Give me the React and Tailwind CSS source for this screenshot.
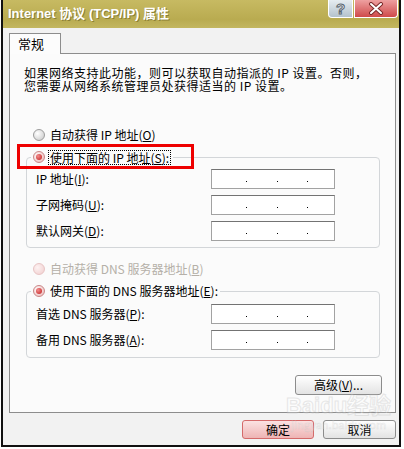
import React from 'react';

const Radio = ({ checked, disabled }) => {
    if (disabled) {
        return <span className="w-[12px] h-[12px] rounded-full border border-[#e8c4c4] bg-[radial-gradient(circle_at_35%_35%,#fdf2f2,#f0cdcd)] shrink-0" />;
    }
    return (
        <span className={`flex items-center justify-center w-[12px] h-[12px] rounded-full border shrink-0 ${checked
                ? 'border-[#c98686] bg-[radial-gradient(circle_at_35%_35%,#ffffff,#ebb2b2)]'
                : 'border-[#9c9c9c] bg-[radial-gradient(circle_at_35%_35%,#ffffff,#c6c6c6)]'
            }`}>
            {checked && <span className="w-[6px] h-[6px] rounded-full bg-[radial-gradient(circle_at_35%_35%,#f48c8c,#bf1d1d)]" />}
        </span>
    );
};

const IpBox = () => (
    <div className="w-[124px] h-[20px] bg-white border border-[#a2a2a2] border-t-[#737373] flex items-end pb-[6px]">
        <span className="ml-[34px] w-px h-px bg-black" />
        <span className="ml-[30px] w-px h-px bg-black" />
        <span className="ml-[29px] w-px h-px bg-black" />
    </div>
);

const Row = ({ label, k, rest }) => (
    <div className="flex items-center h-[20px]">
        <span className="w-[184px] pl-[9px] whitespace-nowrap">
            {label}(<u>{k}</u>){rest}
        </span>
        <IpBox />
    </div>
);

const XpButton = ({ children, primary, className = '' }) => (
    <button className={`flex items-center justify-center rounded-[3px] border text-[12px] leading-none text-black ${primary
            ? 'border-[#d46a6a] bg-[linear-gradient(#fbe2e2,#eeb4b4)]'
            : 'border-[#8c8c8c] bg-[linear-gradient(#ffffff,#e3e3e3)]'
        } ${className}`}>
        {children}
    </button>
);

export default function App() {
    return (
        <div className="w-[404px] h-[449px] bg-white font-['Noto_Sans_CJK_SC',sans-serif] text-[12px] text-black relative overflow-hidden">
            <div className="ml-px w-[400px] h-[447px] flex flex-col border-x-2 border-b-2 border-[#111]">
                {/* title bar */}
                <div className="h-[28px] flex items-start justify-between bg-[linear-gradient(#c7ba62,#b9ab50_70%,#c3b760)] shrink-0">
                    <span className="pl-[5px] pt-[6px] text-white font-bold text-[13px] leading-[16px] font-['Liberation_Sans','Noto_Sans_CJK_SC',sans-serif] [text-shadow:1px_1px_0_#8a7f35]">
                        Internet 协议 (TCP/IP) 属性
                    </span>
                    <div className="flex gap-px pr-px">
                        <div className="w-[25px] h-[18px] rounded-bl-[4px] border border-t-0 border-white bg-[linear-gradient(#e6edf1,#b4c2cc)] flex items-center justify-center">
                            <span className="text-[15px] leading-none font-bold text-[#f4f4f4] font-['Liberation_Sans',sans-serif] [-webkit-text-stroke:1px_#5a6670]">?</span>
                        </div>
                        <div className="w-[44px] h-[18px] rounded-br-[4px] border border-t-0 border-white bg-[linear-gradient(#eea0a0,#cf4a4a)] flex items-center justify-center">
                            <svg width="16" height="13" viewBox="0 0 16 13">
                                <path d="M3 2 L13 11 M13 2 L3 11" stroke="#7a2a2a" strokeWidth="4" strokeLinecap="round" />
                                <path d="M3 2 L13 11 M13 2 L3 11" stroke="#ffffff" strokeWidth="2" strokeLinecap="round" />
                            </svg>
                        </div>
                    </div>
                </div>

                {/* body */}
                <div className="flex-1 bg-[#f2f2f2] pt-[5px] flex flex-col">
                    <div className="ml-[6px] relative z-10 -mb-px w-[52px] h-[21px] border border-b-0 border-[#8d8d8d] bg-[#fcfcfc] flex items-center pl-[8px] text-[13px]">
                        常规
                    </div>
                    <div className="ml-[6px] w-[387px] h-[360px] border border-[#8d8d8d] bg-[#fbfbfb] flex flex-col">
                        <div className="pl-[14px] pt-[12px] tracking-[0.5px] whitespace-nowrap">
                            <div className="h-[13px] leading-[13px]">如果网络支持此功能，则可以获取自动指派的 IP 设置。否则，</div>
                            <div className="h-[13px] leading-[13px]">您需要从网络系统管理员处获得适当的 IP 设置。</div>
                        </div>

                        <div className="mt-[36px] pl-[23px] h-[14px] flex items-center gap-[5px]">
                            <Radio />
                            <span>自动获得 IP 地址(<u>O</u>)</span>
                        </div>

                        <div className="mt-[15px] ml-[16px] w-[354px] border border-[#d3d6d9] rounded-[4px] pb-[6px] flex flex-col">
                            <div className="-mt-[8px] ml-[4px] px-[2px] h-[14px] w-fit flex items-center gap-[3px] bg-[#fbfbfb] relative">
                                <Radio checked />
                                <span className="border border-dotted border-black px-[1px] leading-[13px]">使用下面的 IP 地址(<u>S</u>):</span>
                                <span className="absolute left-[-14px] top-[-6px] w-[177px] h-[25px] border-[3px] border-[#ee0000]" />
                            </div>
                            <div className="mt-[5px] flex flex-col gap-[6px]">
                                <Row label="IP 地址" k="I" rest=":" />
                                <Row label="子网掩码" k="U" rest=":" />
                                <Row label="默认网关" k="D" rest=":" />
                            </div>
                        </div>

                        <div className="mt-[14px] pl-[23px] h-[14px] flex items-center gap-[5px] text-[#b5b0a8]">
                            <Radio disabled />
                            <span>自动获得 DNS 服务器地址(<u>B</u>)</span>
                        </div>

                        <div className="mt-[15px] ml-[16px] w-[354px] border border-[#d3d6d9] rounded-[4px] pb-[7px] flex flex-col">
                            <div className="-mt-[8px] ml-[4px] px-[2px] h-[14px] w-fit flex items-center gap-[5px] bg-[#fbfbfb]">
                                <Radio checked />
                                <span>使用下面的 DNS 服务器地址(<u>E</u>):</span>
                            </div>
                            <div className="mt-[6px] flex flex-col gap-[6px]">
                                <Row label="首选 DNS 服务器" k="P" rest=":" />
                                <Row label="备用 DNS 服务器" k="A" rest=":" />
                            </div>
                        </div>

                        <div className="mt-[17px] flex justify-end pr-[13px]">
                            <XpButton className="w-[87px] h-[20px]">高级(<u>V</u>)...</XpButton>
                        </div>
                    </div>

                    <div className="mt-[7px] flex justify-end gap-[9px] pr-[3px]">
                        <XpButton primary className="w-[72px] h-[19px]">确定</XpButton>
                        <XpButton className="w-[73px] h-[19px]">取消</XpButton>
                    </div>
                </div>
            </div>

            {/* watermark */}
            <div className="absolute left-[286px] top-[394px] flex flex-col items-center pointer-events-none opacity-35">
                <span className="text-[22px] leading-[24px] font-bold text-white font-['Liberation_Sans','Noto_Sans_CJK_SC',sans-serif] [-webkit-text-stroke:1px_#c0c0c0]">Baidu经验</span>
                <span className="text-[11px] leading-[12px] text-white [-webkit-text-stroke:0.5px_#c0c0c0]">jingyan.baidu.com</span>
            </div>
        </div>
    );
}
